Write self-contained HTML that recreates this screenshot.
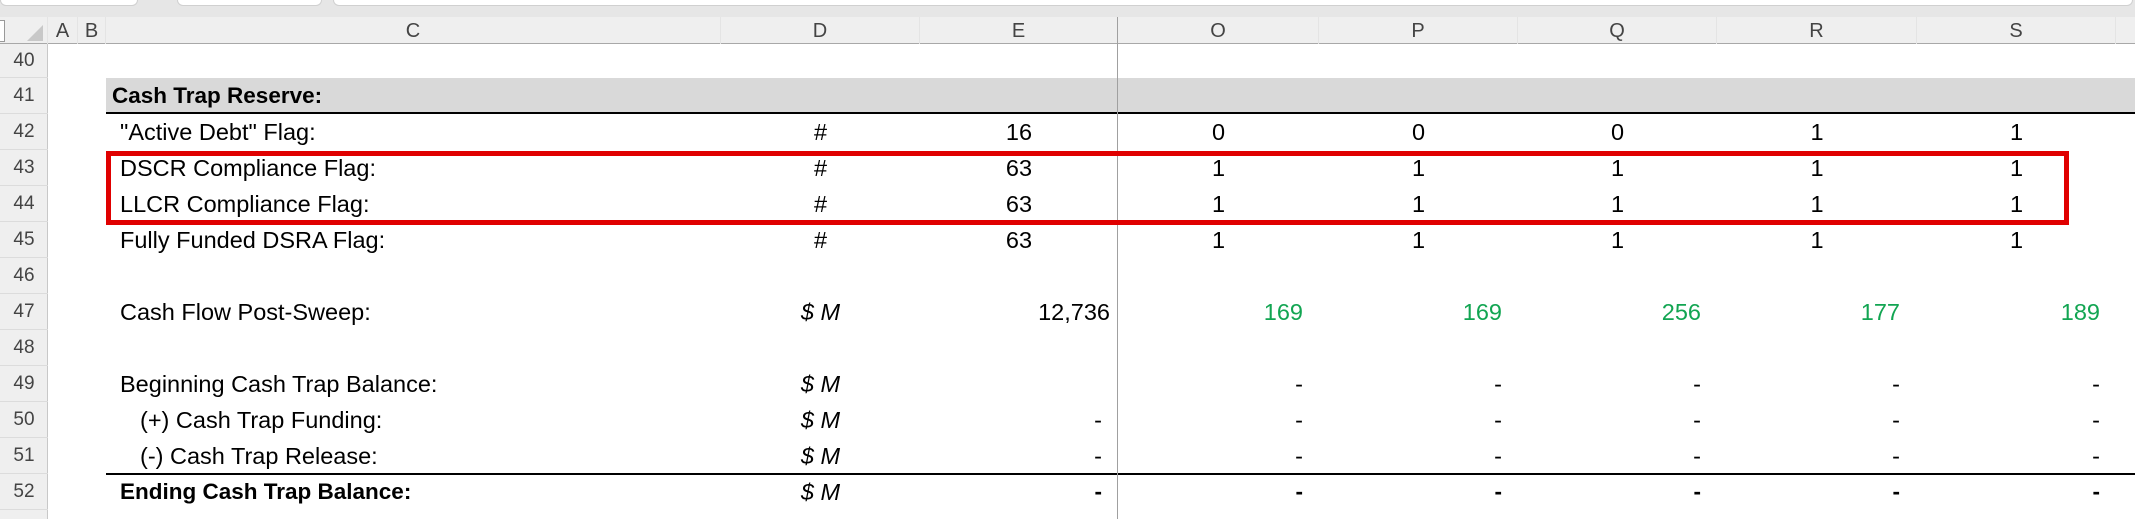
<!DOCTYPE html>
<html><head><meta charset="utf-8"><style>
*{margin:0;padding:0;box-sizing:border-box}
body{width:2135px;height:519px;overflow:hidden;background:#fff;position:relative;font-family:"Liberation Sans",Arial,sans-serif;}
.a{position:absolute;white-space:nowrap}
.top{left:0;top:0;width:2135px;height:17px;background:#e6e6e6}
.tab{top:0;height:6px;background:#fff;border-radius:0 0 8px 8px;border:1px solid #d0d0d0;border-top:none}
.hdr{left:0;top:17px;width:2135px;height:27px;background:#efefef;border-bottom:1px solid #a8a8a8}
.h{top:17px;height:27px;line-height:29px;text-align:center;color:#444;font-size:20px;border-right:1px solid #e4e4e4}
.gut{left:0;top:44px;width:48px;height:475px;background:#efefef;border-right:1px solid #c8c8c8}
.rn{left:0;width:48px;text-align:center;color:#444;font-size:19px;border-bottom:1px solid #dcdcdc}
.c{font-size:23.5px;color:#000;height:36px;line-height:36px}
.ctr{text-align:center}
.rt{text-align:right}
.g{color:#12a552}
.b{font-weight:bold;font-size:22.5px}
.i{font-style:italic}
</style></head><body>
<div class="a top"></div>
<div class="a tab" style="left:0;width:138px"></div>
<div class="a tab" style="left:177px;width:145px"></div>
<div class="a tab" style="left:333px;width:1800px"></div>
<div class="a hdr"></div>
<div class="a" style="left:0;top:20px;width:5px;height:22px;border:1px solid #999;border-left:none;background:#fff"></div>
<div class="a h" style="left:0;width:48px"><span style="position:absolute;right:4px;bottom:3px;width:0;height:0;border-left:16px solid transparent;border-bottom:16px solid #c8c8c8"></span></div>
<div class="a h" style="left:48px;width:30px">A</div>
<div class="a h" style="left:78px;width:28px">B</div>
<div class="a h" style="left:106px;width:615px">C</div>
<div class="a h" style="left:721px;width:199px">D</div>
<div class="a h" style="left:920px;width:198px">E</div>
<div class="a h" style="left:1118px;width:201px">O</div>
<div class="a h" style="left:1319px;width:199px">P</div>
<div class="a h" style="left:1518px;width:199px">Q</div>
<div class="a h" style="left:1717px;width:200px">R</div>
<div class="a h" style="left:1917px;width:199px">S</div>
<div class="a gut"></div>
<div class="a rn" style="top:44px;height:34px;line-height:34px">40</div>
<div class="a rn" style="top:78px;height:36px;line-height:36px">41</div>
<div class="a rn" style="top:114px;height:36px;line-height:36px">42</div>
<div class="a rn" style="top:150px;height:36px;line-height:36px">43</div>
<div class="a rn" style="top:186px;height:36px;line-height:36px">44</div>
<div class="a rn" style="top:222px;height:36px;line-height:36px">45</div>
<div class="a rn" style="top:258px;height:36px;line-height:36px">46</div>
<div class="a rn" style="top:294px;height:36px;line-height:36px">47</div>
<div class="a rn" style="top:330px;height:36px;line-height:36px">48</div>
<div class="a rn" style="top:366px;height:36px;line-height:36px">49</div>
<div class="a rn" style="top:402px;height:36px;line-height:36px">50</div>
<div class="a rn" style="top:438px;height:36px;line-height:36px">51</div>
<div class="a rn" style="top:474px;height:36px;line-height:36px">52</div>

<div class="a" style="left:106px;top:78px;width:2029px;height:36px;background:#d9d9d9;border-bottom:2px solid #000"></div>
<div class="a" style="left:106px;top:473px;width:2029px;height:2px;background:#000"></div>
<div class="a" style="left:1117px;top:17px;width:1px;height:502px;background:#a0a0a0"></div>

<div class="a c b" style="left:112px;top:78px">Cash Trap Reserve:</div>
<div class="a c" style="left:120px;top:114px">"Active Debt" Flag:</div>
<div class="a c" style="left:120px;top:150px">DSCR Compliance Flag:</div>
<div class="a c" style="left:120px;top:186px">LLCR Compliance Flag:</div>
<div class="a c" style="left:120px;top:222px">Fully Funded DSRA Flag:</div>
<div class="a c" style="left:120px;top:294px">Cash Flow Post-Sweep:</div>
<div class="a c" style="left:120px;top:366px">Beginning Cash Trap Balance:</div>
<div class="a c" style="left:140px;top:402px">(+) Cash Trap Funding:</div>
<div class="a c" style="left:140px;top:438px">(-) Cash Trap Release:</div>
<div class="a c b" style="left:120px;top:474px">Ending Cash Trap Balance:</div>

<div class="a c ctr" style="left:721px;width:199px;top:114px">#</div>
<div class="a c ctr" style="left:721px;width:199px;top:150px">#</div>
<div class="a c ctr" style="left:721px;width:199px;top:186px">#</div>
<div class="a c ctr" style="left:721px;width:199px;top:222px">#</div>
<div class="a c ctr i" style="left:721px;width:199px;top:294px">$ M</div>
<div class="a c ctr i" style="left:721px;width:199px;top:366px">$ M</div>
<div class="a c ctr i" style="left:721px;width:199px;top:402px">$ M</div>
<div class="a c ctr i" style="left:721px;width:199px;top:438px">$ M</div>
<div class="a c ctr i" style="left:721px;width:199px;top:474px">$ M</div>

<div class="a c ctr" style="left:920px;width:198px;top:114px">16</div>
<div class="a c ctr" style="left:920px;width:198px;top:150px">63</div>
<div class="a c ctr" style="left:920px;width:198px;top:186px">63</div>
<div class="a c ctr" style="left:920px;width:198px;top:222px">63</div>
<div class="a c rt" style="left:920px;width:190px;top:294px">12,736</div>
<div class="a c rt" style="left:920px;width:182px;top:402px">-</div>
<div class="a c rt" style="left:920px;width:182px;top:438px">-</div>
<div class="a c rt b" style="left:920px;width:182px;top:474px">-</div>

<div class="a c ctr" style="left:1118px;width:201px;top:114px">0</div>
<div class="a c ctr" style="left:1319px;width:199px;top:114px">0</div>
<div class="a c ctr" style="left:1518px;width:199px;top:114px">0</div>
<div class="a c ctr" style="left:1717px;width:200px;top:114px">1</div>
<div class="a c ctr" style="left:1917px;width:199px;top:114px">1</div>
<div class="a c ctr" style="left:1118px;width:201px;top:150px">1</div>
<div class="a c ctr" style="left:1319px;width:199px;top:150px">1</div>
<div class="a c ctr" style="left:1518px;width:199px;top:150px">1</div>
<div class="a c ctr" style="left:1717px;width:200px;top:150px">1</div>
<div class="a c ctr" style="left:1917px;width:199px;top:150px">1</div>
<div class="a c ctr" style="left:1118px;width:201px;top:186px">1</div>
<div class="a c ctr" style="left:1319px;width:199px;top:186px">1</div>
<div class="a c ctr" style="left:1518px;width:199px;top:186px">1</div>
<div class="a c ctr" style="left:1717px;width:200px;top:186px">1</div>
<div class="a c ctr" style="left:1917px;width:199px;top:186px">1</div>
<div class="a c ctr" style="left:1118px;width:201px;top:222px">1</div>
<div class="a c ctr" style="left:1319px;width:199px;top:222px">1</div>
<div class="a c ctr" style="left:1518px;width:199px;top:222px">1</div>
<div class="a c ctr" style="left:1717px;width:200px;top:222px">1</div>
<div class="a c ctr" style="left:1917px;width:199px;top:222px">1</div>

<div class="a c rt g" style="left:1118px;width:185px;top:294px">169</div>
<div class="a c rt g" style="left:1319px;width:183px;top:294px">169</div>
<div class="a c rt g" style="left:1518px;width:183px;top:294px">256</div>
<div class="a c rt g" style="left:1717px;width:183px;top:294px">177</div>
<div class="a c rt g" style="left:1917px;width:183px;top:294px">189</div>

<div class="a c rt" style="left:1118px;width:185px;top:366px">-</div>
<div class="a c rt" style="left:1319px;width:183px;top:366px">-</div>
<div class="a c rt" style="left:1518px;width:183px;top:366px">-</div>
<div class="a c rt" style="left:1717px;width:183px;top:366px">-</div>
<div class="a c rt" style="left:1917px;width:183px;top:366px">-</div>
<div class="a c rt" style="left:1118px;width:185px;top:402px">-</div>
<div class="a c rt" style="left:1319px;width:183px;top:402px">-</div>
<div class="a c rt" style="left:1518px;width:183px;top:402px">-</div>
<div class="a c rt" style="left:1717px;width:183px;top:402px">-</div>
<div class="a c rt" style="left:1917px;width:183px;top:402px">-</div>
<div class="a c rt" style="left:1118px;width:185px;top:438px">-</div>
<div class="a c rt" style="left:1319px;width:183px;top:438px">-</div>
<div class="a c rt" style="left:1518px;width:183px;top:438px">-</div>
<div class="a c rt" style="left:1717px;width:183px;top:438px">-</div>
<div class="a c rt" style="left:1917px;width:183px;top:438px">-</div>
<div class="a c rt b" style="left:1118px;width:185px;top:474px">-</div>
<div class="a c rt b" style="left:1319px;width:183px;top:474px">-</div>
<div class="a c rt b" style="left:1518px;width:183px;top:474px">-</div>
<div class="a c rt b" style="left:1717px;width:183px;top:474px">-</div>
<div class="a c rt b" style="left:1917px;width:183px;top:474px">-</div>

<div class="a" style="left:106px;top:151px;width:1963px;height:74px;border:5px solid #e00000"></div>
</body></html>
